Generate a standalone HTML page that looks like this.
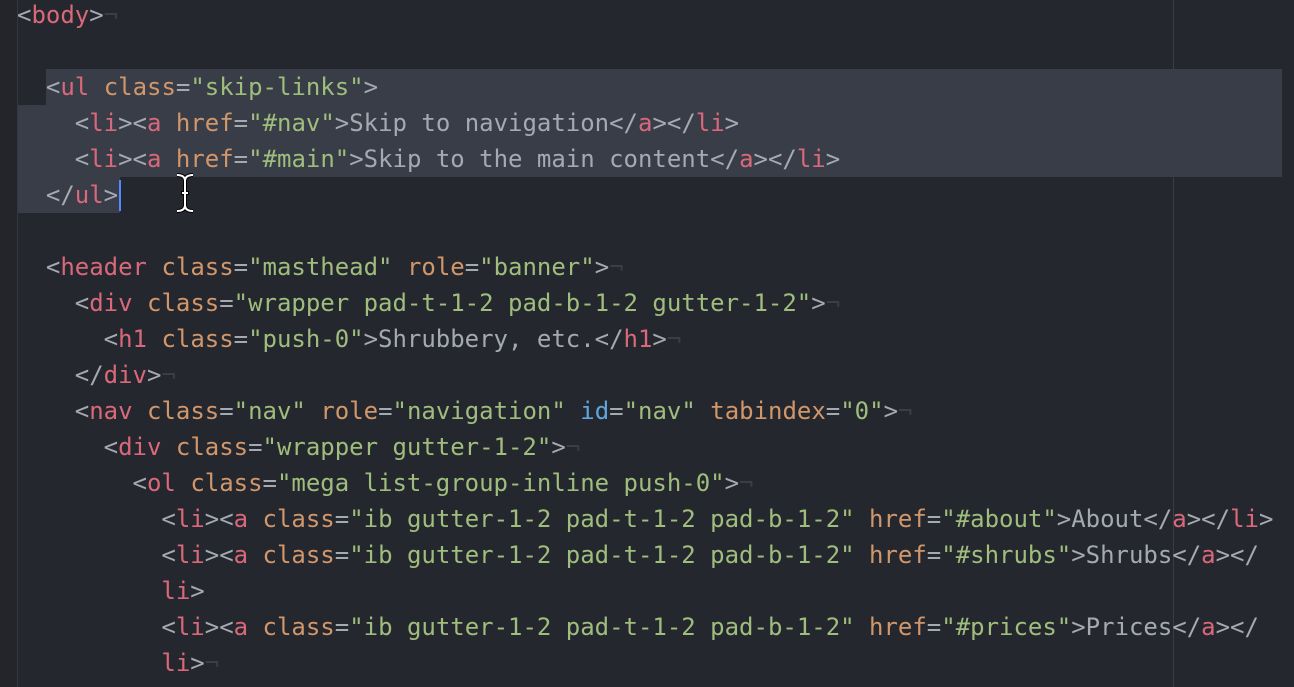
<!DOCTYPE html>
<html><head><meta charset="utf-8"><style>
html,body{margin:0;padding:0;background:#25272e;width:1294px;height:687px;overflow:hidden;position:relative}
.code{position:absolute;left:17px;top:-3px;font-family:"DejaVu Sans Mono","Liberation Mono",monospace;font-size:24px;line-height:36px;color:#abb2bf;white-space:pre;letter-spacing:-0.01px}
.t{color:#d9697a}.a{color:#d1976a}.s{color:#9fbd7c}.b{color:#5fa5dd}.p{color:#a5a9b1}.e{color:#3a3e48}
.sel{position:absolute;background:#393d48}
.vl{position:absolute;top:0;bottom:0;width:1px;background:#343741}
.gut{position:absolute;left:0;top:0;bottom:0;width:17px;background:#23252b}
</style></head><body>
<div class="gut"></div>
<div class="sel" style="left:46px;top:69px;width:1236px;height:36px"></div>
<div class="sel" style="left:17px;top:105px;width:1265px;height:72px"></div>
<div class="sel" style="left:17px;top:177px;width:103px;height:36px"></div>
<div class="vl" style="left:1173px;background:#3a3d48"></div>
<div class="vl" style="left:17px"></div>
<div style="position:absolute;left:119px;top:180px;width:2px;height:31px;background:#528bff"></div>
<svg style="position:absolute;left:172px;top:172px" width="26" height="42" viewBox="0 0 26 42"><path d="M5 3 Q13 3 13 9 Q13 3 21 3 M13 9 V33 M5 39 Q13 39 13 33 Q13 39 21 39 M9 21 H17" fill="none" stroke="#000" stroke-width="4"/><path d="M5 3 Q13 3 13 9 Q13 3 21 3 M13 9 V33 M5 39 Q13 39 13 33 Q13 39 21 39 M10 21 H16" fill="none" stroke="#fff" stroke-width="2"/></svg>
<div class="code"><span class="p">&lt;</span><span class="t">body</span><span class="p">&gt;</span><span class="e">¬</span>
<span class="e"></span>
  <span class="p">&lt;</span><span class="t">ul</span> <span class="a">class</span><span class="p">=</span><span class="s">"skip-links"</span><span class="p">&gt;</span><span class="e">¬</span>
    <span class="p">&lt;</span><span class="t">li</span><span class="p">&gt;&lt;</span><span class="t">a</span> <span class="a">href</span><span class="p">=</span><span class="s">"#nav"</span><span class="p">&gt;Skip to navigation&lt;/</span><span class="t">a</span><span class="p">&gt;&lt;/</span><span class="t">li</span><span class="p">&gt;</span><span class="e">¬</span>
    <span class="p">&lt;</span><span class="t">li</span><span class="p">&gt;&lt;</span><span class="t">a</span> <span class="a">href</span><span class="p">=</span><span class="s">"#main"</span><span class="p">&gt;Skip to the main content&lt;/</span><span class="t">a</span><span class="p">&gt;&lt;/</span><span class="t">li</span><span class="p">&gt;</span><span class="e">¬</span>
  <span class="p">&lt;/</span><span class="t">ul</span><span class="p">&gt;</span>

  <span class="p">&lt;</span><span class="t">header</span> <span class="a">class</span><span class="p">=</span><span class="s">"masthead"</span> <span class="a">role</span><span class="p">=</span><span class="s">"banner"</span><span class="p">&gt;</span><span class="e">¬</span>
    <span class="p">&lt;</span><span class="t">div</span> <span class="a">class</span><span class="p">=</span><span class="s">"wrapper pad-t-1-2 pad-b-1-2 gutter-1-2"</span><span class="p">&gt;</span><span class="e">¬</span>
      <span class="p">&lt;</span><span class="t">h1</span> <span class="a">class</span><span class="p">=</span><span class="s">"push-0"</span><span class="p">&gt;Shrubbery, etc.&lt;/</span><span class="t">h1</span><span class="p">&gt;</span><span class="e">¬</span>
    <span class="p">&lt;/</span><span class="t">div</span><span class="p">&gt;</span><span class="e">¬</span>
    <span class="p">&lt;</span><span class="t">nav</span> <span class="a">class</span><span class="p">=</span><span class="s">"nav"</span> <span class="a">role</span><span class="p">=</span><span class="s">"navigation"</span> <span class="b">id</span><span class="p">=</span><span class="s">"nav"</span> <span class="a">tabindex</span><span class="p">=</span><span class="s">"0"</span><span class="p">&gt;</span><span class="e">¬</span>
      <span class="p">&lt;</span><span class="t">div</span> <span class="a">class</span><span class="p">=</span><span class="s">"wrapper gutter-1-2"</span><span class="p">&gt;</span><span class="e">¬</span>
        <span class="p">&lt;</span><span class="t">ol</span> <span class="a">class</span><span class="p">=</span><span class="s">"mega list-group-inline push-0"</span><span class="p">&gt;</span><span class="e">¬</span>
          <span class="p">&lt;</span><span class="t">li</span><span class="p">&gt;&lt;</span><span class="t">a</span> <span class="a">class</span><span class="p">=</span><span class="s">"ib gutter-1-2 pad-t-1-2 pad-b-1-2"</span> <span class="a">href</span><span class="p">=</span><span class="s">"#about"</span><span class="p">&gt;About&lt;/</span><span class="t">a</span><span class="p">&gt;&lt;/</span><span class="t">li</span><span class="p">&gt;</span>
          <span class="p">&lt;</span><span class="t">li</span><span class="p">&gt;&lt;</span><span class="t">a</span> <span class="a">class</span><span class="p">=</span><span class="s">"ib gutter-1-2 pad-t-1-2 pad-b-1-2"</span> <span class="a">href</span><span class="p">=</span><span class="s">"#shrubs"</span><span class="p">&gt;Shrubs&lt;/</span><span class="t">a</span><span class="p">&gt;&lt;/</span>
          <span class="t">li</span><span class="p">&gt;</span>
          <span class="p">&lt;</span><span class="t">li</span><span class="p">&gt;&lt;</span><span class="t">a</span> <span class="a">class</span><span class="p">=</span><span class="s">"ib gutter-1-2 pad-t-1-2 pad-b-1-2"</span> <span class="a">href</span><span class="p">=</span><span class="s">"#prices"</span><span class="p">&gt;Prices&lt;/</span><span class="t">a</span><span class="p">&gt;&lt;/</span>
          <span class="t">li</span><span class="p">&gt;</span><span class="e">¬</span></div>
</body></html>
